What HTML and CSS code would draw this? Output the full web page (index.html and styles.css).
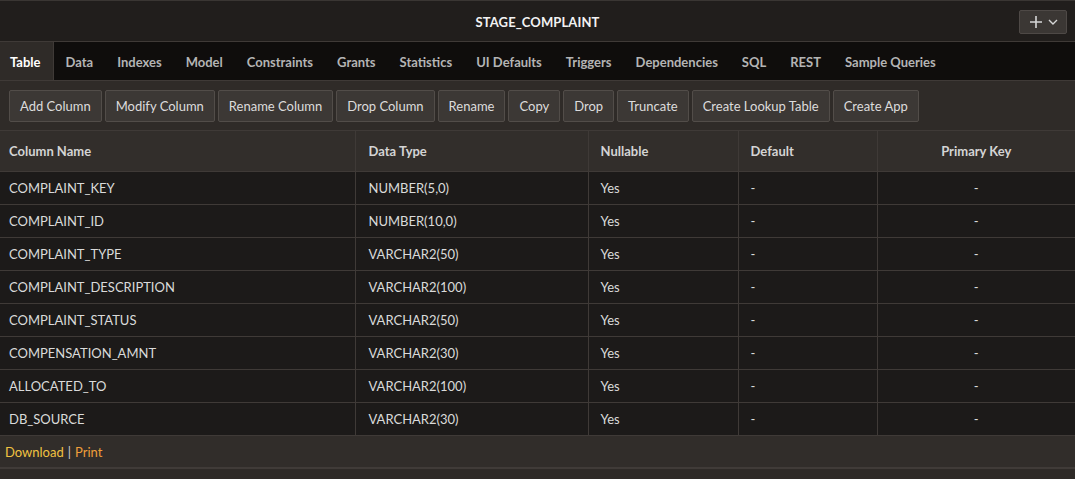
FILE: index.html
```html
<!DOCTYPE html>
<html>
<head>
<meta charset="utf-8">
<link rel="stylesheet" href="styles.css">
</head>
<body>
<div class="page">
  <header class="titlebar">
    <div class="title">STAGE_COMPLAINT</div>
    <button class="addbtn" type="button">
      <svg width="14" height="14" viewBox="0 0 14 14"><path d="M7 1v12M1 7h12" stroke="#d6d6d6" stroke-width="1.6" fill="none"/></svg>
      <svg width="10" height="8" viewBox="0 0 10 8"><path d="M1 2l4 4 4-4" stroke="#d6d6d6" stroke-width="1.4" fill="none"/></svg>
    </button>
  </header>
  <nav class="tabs">
    <a class="tab active">Table</a>
    <a class="tab">Data</a>
    <a class="tab">Indexes</a>
    <a class="tab">Model</a>
    <a class="tab">Constraints</a>
    <a class="tab">Grants</a>
    <a class="tab">Statistics</a>
    <a class="tab">UI Defaults</a>
    <a class="tab">Triggers</a>
    <a class="tab">Dependencies</a>
    <a class="tab">SQL</a>
    <a class="tab">REST</a>
    <a class="tab">Sample Queries</a>
  </nav>
  <div class="toolbar">
    <button class="btn">Add Column</button>
    <button class="btn">Modify Column</button>
    <button class="btn">Rename Column</button>
    <button class="btn">Drop Column</button>
    <button class="btn">Rename</button>
    <button class="btn">Copy</button>
    <button class="btn">Drop</button>
    <button class="btn">Truncate</button>
    <button class="btn">Create Lookup Table</button>
    <button class="btn">Create App</button>
  </div>
  <table class="grid">
    <colgroup>
      <col class="c1"><col class="c2"><col class="c3"><col class="c4"><col class="c5">
    </colgroup>
    <thead>
      <tr><th>Column Name</th><th>Data Type</th><th>Nullable</th><th>Default</th><th class="center">Primary Key</th></tr>
    </thead>
    <tbody>
      <tr><td>COMPLAINT_KEY</td><td>NUMBER(5,0)</td><td>Yes</td><td>-</td><td class="center">-</td></tr>
      <tr><td>COMPLAINT_ID</td><td>NUMBER(10,0)</td><td>Yes</td><td>-</td><td class="center">-</td></tr>
      <tr><td>COMPLAINT_TYPE</td><td>VARCHAR2(50)</td><td>Yes</td><td>-</td><td class="center">-</td></tr>
      <tr><td>COMPLAINT_DESCRIPTION</td><td>VARCHAR2(100)</td><td>Yes</td><td>-</td><td class="center">-</td></tr>
      <tr><td>COMPLAINT_STATUS</td><td>VARCHAR2(50)</td><td>Yes</td><td>-</td><td class="center">-</td></tr>
      <tr><td>COMPENSATION_AMNT</td><td>VARCHAR2(30)</td><td>Yes</td><td>-</td><td class="center">-</td></tr>
      <tr><td>ALLOCATED_TO</td><td>VARCHAR2(100)</td><td>Yes</td><td>-</td><td class="center">-</td></tr>
      <tr><td>DB_SOURCE</td><td>VARCHAR2(30)</td><td>Yes</td><td>-</td><td class="center">-</td></tr>
    </tbody>
  </table>
  <div class="footer">
    <a class="dl">Download</a> <span class="sep">|</span> <a class="pr">Print</a>
  </div>
  <div class="bottom"></div>
</div>
</body>
</html>
```
FILE: styles.css
```css
* { box-sizing: border-box; }
html, body { margin: 0; padding: 0; background: #2b2825; }
body {
  font-family: "Segoe UI", Lato, "Noto Sans", sans-serif;
  font-size: 13px;
  color: #d9d9d9;
  width: 1075px;
  height: 479px;
  overflow: hidden;
}
.page { display: flex; flex-direction: column; }
.titlebar {
  height: 42px;
  background: #211e1c;
  border-top: 1px solid #3a3633;
  border-bottom: 1px solid #3f3a37;
  display: flex;
  align-items: center;
  justify-content: center;
  position: relative;
}
.title { font-weight: 700; color: #f2f2f2; font-size: 13px; letter-spacing: 0.1px; padding-top: 1px; }
.addbtn {
  position: absolute;
  right: 8px;
  top: 9px;
  width: 48px;
  height: 24px;
  background: #3b3734;
  border: 1px solid #4e4946;
  border-radius: 2px;
  display: flex;
  align-items: center;
  justify-content: center;
  gap: 5px;
  padding: 0;
  margin: 0;
}
.tabs {
  height: 39px;
  background: #0f0d0c;
  border-bottom: 1px solid #3f3a37;
  display: flex;
  align-items: stretch;
}
.tab {
  display: flex;
  align-items: center;
  padding: 1px 12px 0 12px;
  font-weight: 700;
  color: #b4b4b4;
  font-size: 13px;
}
.tab.active { background: #2f2b28; color: #ffffff; border-right: 1px solid #3f3a37; padding: 1px 12px 0 10px; }
.toolbar {
  height: 49px;
  background: #2f2b28;
  display: flex;
  align-items: center;
  gap: 3px;
  padding: 0 9px;
}
.btn {
  height: 32px;
  background: #3c3835;
  border: 1px solid #524d49;
  border-radius: 2px;
  color: #dcdcdc;
  font-family: inherit;
  font-size: 13px;
  padding: 0 10px;
  margin: 0;
}
.grid {
  width: 1075px;
  border-collapse: collapse;
  table-layout: fixed;
  border-top: 1px solid #3f3a37;
}
.c1 { width: 355px; }
.c2 { width: 233px; }
.c3 { width: 150px; }
.c4 { width: 139px; }
.c5 { width: 198px; }
.grid th {
  height: 41px;
  background: #322e2b;
  text-align: left;
  font-weight: 700;
  color: #d4d4d4;
  padding: 0 9px;
  border-left: 1px solid #3f3a37;
  border-bottom: 1px solid #3f3a37;
}
.grid td {
  height: 33px;
  background: #1c1a19;
  padding: 0 9px 0 13px;
  border-left: 1px solid #3f3a37;
  border-bottom: 1px solid #3f3a37;
  color: #dadada;
}
.grid th:first-child, .grid td:first-child { border-left: none; padding-left: 9px; }
.grid td:nth-child(2) { padding-left: 13px; }
.grid td:nth-child(3) { padding-left: 12px; }
.grid td:nth-child(4) { padding-left: 12px; }
.grid th:nth-child(2) { padding-left: 13px; }
.grid th:nth-child(3) { padding-left: 12px; }
.grid th:nth-child(4) { padding-left: 12px; }
.grid .center { text-align: center; padding-left: 0; padding-right: 0; }
.footer {
  height: 33px;
  background: #312d2a;
  display: flex;
  align-items: center;
  padding: 0 5px;
  gap: 4px;
  border-bottom: 2px solid #403b38;
}
.dl { color: #f0c241; }
.sep { color: #d0d0d0; }
.pr { color: #ef9f3a; }
.bottom { height: 11px; background: #2e2a27; }
```
